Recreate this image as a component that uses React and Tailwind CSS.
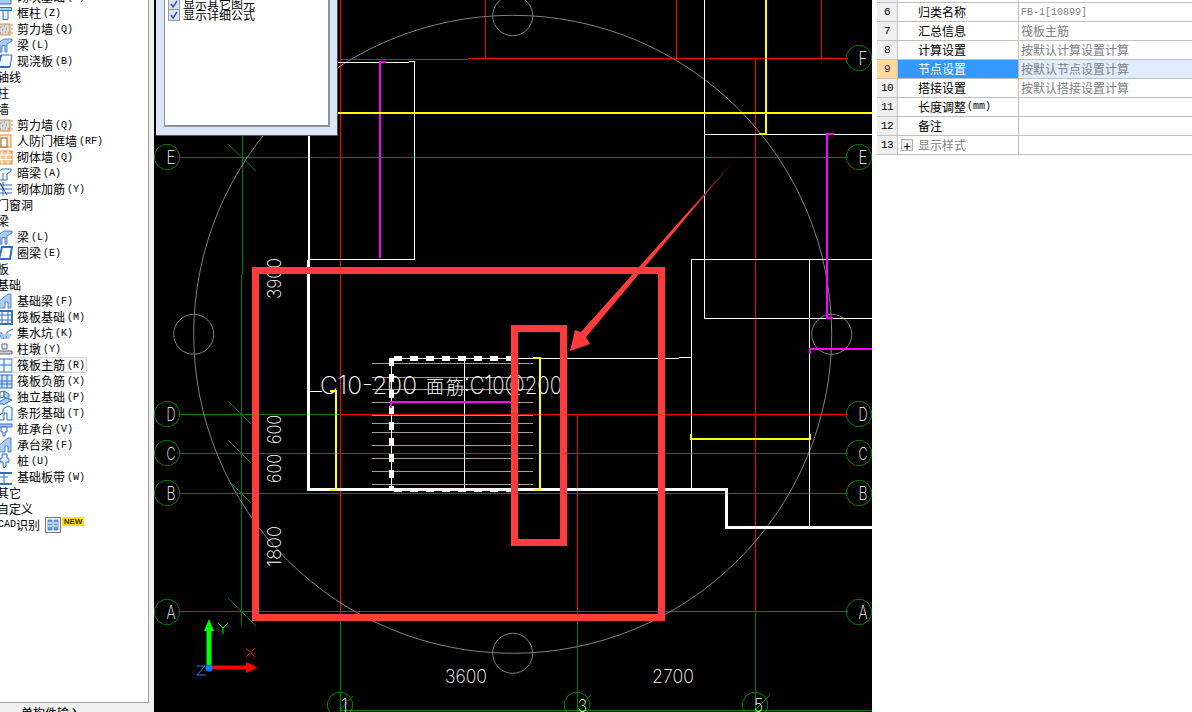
import React from "react";

const SANS = "font-['Noto_Sans_CJK_SC',sans-serif]";
const MONO = "font-['Liberation_Mono','Noto_Sans_CJK_SC',monospace]";

function Ico({ k }) {
  const B = "#2f6fc4", L = "#a8cdf0", O = "#e08a3c";
  const shapes = {
    top: <><path d="M2 9h12v6H2z" fill={L} stroke={B} /><path d="M5 9V4h6v5" fill="#fff" stroke={B} /></>,
    col: <><path d="M1.500 2.500h13v3h-13z" fill={L} stroke={B} /><path d="M6 5.500h5v9H6z" fill="#fff" stroke={B} /></>,
    wall: <><rect x="1" y="3" width="12" height="11" fill="#d8d8d8" stroke={O} /><path d="M3 6h1M7 5h1M5 9h1M9 8h1M3 12h1M8 11h1M11 12h1" stroke="#777" /><path d="M14 4h2M14 8h2M14 12h2" stroke={O} /></>,
    beam: <><path d="M1 6l6-4h8v2L10 7v8H8V8L5 9v6H3V9z" fill={L} stroke={B} strokeWidth=".8" /></>,
    slab: <><path d="M4 2h11l-2 12H1z" fill="#f4f9ff" stroke={B} /><path d="M4 2L1 14h12" fill="none" stroke={B} strokeWidth="2" /></>,
    door: <><rect x="1" y="2" width="13" height="12" fill="#fbe5cf" stroke={O} /><rect x="4" y="5" width="6" height="9" fill="#fff" stroke="#a05a1c" /></>,
    brick: <><rect x="0" y="2" width="15" height="13" fill="#f5c596" stroke={O} /><path d="M0 6h15M0 10.500h15M5 2v4M11 2v4M3 6v4.500M9 6v4.500M5 10.500V15M11 10.500V15" stroke="#fff" /></>,
    dark: <><path d="M1 7l4-3h9v2l-4 3v6H2V8z" fill="#eef6ff" stroke={B} /><path d="M6 8v7" stroke="#777" /></>,
    rein: <><path d="M1 4h14M1 8h14M1 12h14M6 1v14" stroke={B} fill="none" /><path d="M3 2l7 12" stroke="#1c3f80" /></>,
    ring: <><path d="M5 2h10l-2 12H2z" fill="none" stroke={B} strokeWidth="2" /></>,
    fbeam: <><path d="M1 15V9l5-4 5-4h3v14h-3V9H8v6z" fill={L} stroke={B} strokeWidth=".8" /></>,
    raft: <><rect x="1" y="2" width="14" height="13" fill="#fff" stroke={B} strokeWidth="2" /><path d="M5 2v13M11 2v13M1 6h14M1 11h14" stroke={B} /></>,
    pit: <><path d="M0 8h5v5h5V7l6-3" fill="none" stroke={B} /><path d="M0 9l4 5h8l3-5" fill={L} /><path d="M3 11h1M6 13h1M9 12h1" stroke={B} /></>,
    pier: <><path d="M5 3h5v5H5z" fill="#dfe8f2" stroke="#667" /><path d="M1 10h14v3H1z" fill="#c8ccd2" stroke="#667" /></>,
    main: <><rect x="0" y="2" width="15" height="13" fill="#eef6ff" stroke={B} /><path d="M0 8h15M7 2v13" stroke={B} /></>,
    neg: <><rect x="0" y="2" width="15" height="13" fill="#cfe2f7" stroke={B} /><path d="M0 8h15M0 11h15M5 2v13M10 2v13" stroke={B} /></>,
    iso: <><path d="M0 14l9-5 6 2-8 4.500z" fill={L} stroke={B} /><path d="M3 9V3l4-1v6z" fill="#fff" stroke={B} /><path d="M7 8V2l5 3v5z" fill={L} stroke={B} /></>,
    strip: <><path d="M1 15v-4l5-3V4l5-3 4 2v12h-5V8H7v7z" fill="#eef6ff" stroke={B} /></>,
    cap: <><path d="M0 3h15v3H0z" fill={L} stroke={B} /><path d="M4 6h6v5H8v4H6v-4H4z" fill="#fff" stroke={B} /></>,
    pile: <><path d="M5 1h5v4l2 1v3h-3v4l-2 2-1-2V9H3V6l2-1z" fill="#dce9f7" stroke={B} /></>,
    band: <><path d="M0 4h15M0 15h15" stroke={B} strokeWidth="2" /><path d="M7 4v11M3 8h8" stroke={B} /></>,
  };
  return <svg width="16" height="16" viewBox="0 0 16 16" className="shrink-0 -ml-[3px] mr-[4px]">{shapes[k]}</svg>;
}

const tree = [
  ["砌块基础", "M", "top"], ["框柱", "Z", "col"], ["剪力墙", "Q", "wall"], ["梁", "L", "beam"], ["现浇板", "B", "slab"],
  ["轴线"], ["柱"], ["墙"],
  ["剪力墙", "Q", "wall"], ["人防门框墙", "RF", "door"], ["砌体墙", "Q", "brick"], ["暗梁", "A", "dark"], ["砌体加筋", "Y", "rein"],
  ["门窗洞"], ["梁"],
  ["梁", "L", "beam"], ["圈梁", "E", "ring"],
  ["板"], ["基础"],
  ["基础梁", "F", "fbeam"], ["筏板基础", "M", "raft"], ["集水坑", "K", "pit"], ["柱墩", "Y", "pier"],
  ["筏板主筋", "R", "main", true], ["筏板负筋", "X", "neg"], ["独立基础", "P", "iso"], ["条形基础", "T", "strip"],
  ["桩承台", "V", "cap"], ["承台梁", "F", "fbeam"], ["桩", "U", "pile"], ["基础板带", "W", "band"],
  ["其它"], ["自定义"],
];

function TreeRow({ n, key2, k, sel }) {
  if (!k) return <div className={`h-4 leading-4 text-xs -ml-[3px] ${SANS}`}>{n}</div>;
  return (
    <div className="h-4 flex items-center relative">
      <Ico k={k} />
      {sel && <div className="absolute left-[12px] w-[75px] top-0 h-4 rounded-[2px] border border-[#d2d2d2] bg-[#f7f7f7]" />}
      <span className={`relative text-xs leading-4 ${SANS}`}>{n}</span>
      <span className={`relative top-[1px] ml-[2px] text-[10px] leading-4 ${MONO}`}>({key2})</span>
    </div>
  );
}

const rows = [
  [6, "归类名称", "FB-1[10899]"],
  [7, "汇总信息", "筏板主筋"],
  [8, "计算设置", "按默认计算设置计算"],
  [9, "节点设置", "按默认节点设置计算"],
  [10, "搭接设置", "按默认搭接设置计算"],
  [11, "长度调整", ""],
  [12, "备注", ""],
  [13, "显示样式", ""],
];

function PropRow({ no, name, val }) {
  const sel = no === 9;
  const last = no === 13;
  return (
    <div className="flex h-[19px] border-b border-[#c0c0c0]">
      <div className={`w-[21px] shrink-0 border-r border-[#c0c0c0] flex items-center justify-center text-[11px] tracking-[-0.6px] ${MONO} ${sel ? "bg-[#ffd79f] text-[#40107a]" : "bg-[#f0f0f0] text-black"}`}>{no}</div>
      <div className={`w-[121px] shrink-0 border-r border-[#c0c0c0] flex items-center text-xs ${SANS} ${sel ? "bg-[#3399ff] text-white" : ""} ${last ? "text-[#808080]" : ""}`}>
        {last ? (
          <span className="ml-[3px] mr-[5px] w-3 h-3 border border-[#b5b5b5] bg-[#eeeeee] flex items-center justify-center text-black text-[13px] leading-none">+</span>
        ) : (
          <span className="w-5 shrink-0" />
        )}
        {name}
        {no === 11 && <span className={`ml-[1px] text-[10px] ${MONO}`}>(mm)</span>}
      </div>
      <div className={`flex-1 pl-[2px] flex items-center text-[#808080] ${no === 6 ? `text-[10px] ${MONO}` : `text-xs ${SANS}`} ${sel ? "bg-[#deecfb]" : ""}`}>{val}</div>
    </div>
  );
}

const G = "#008000", R = "#ff0000", W = "#ffffff", Y = "#ffff00", M = "#ff00ff", A = "#808080", P = "#ff3b3b", BR = "#a89a92";

function Lines({ c, w = 1, d }) {
  return <path d={d} stroke={c} strokeWidth={w} fill="none" shapeRendering="crispEdges" />;
}

const CAD = "Inter, 'Noto Sans CJK SC', sans-serif";

function Bubble({ x, y, t, dx = 4 }) {
  const pts = Array.from({ length: 12 }, (_, i) => {
    const a = (i * Math.PI) / 6 + Math.PI / 12;
    return `${(x + 12.8 * Math.cos(a)).toFixed(1)},${(y + 12.8 * Math.sin(a)).toFixed(1)}`;
  }).join(" ");
  const narrow = t === "1";
  return (
    <g>
      <polygon points={pts} fill="none" stroke={G} />
      <text x={x + dx - (narrow ? 1 : 4.5)} y={y + 6.500} textLength={narrow ? undefined : 9} lengthAdjust="spacingAndGlyphs" fontFamily={CAD} fontWeight="200" fontSize="18" fill={W}>{t}</text>
    </g>
  );
}

function Dim({ x, y, t, r, len }) {
  return (
    <text x={x} y={y} transform={r ? `rotate(-90 ${x} ${y})` : undefined} textLength={len} lengthAdjust="spacingAndGlyphs" fontFamily={CAD} fontWeight="200" fontSize="19" fill={W}>{t}</text>
  );
}

function Canvas() {
  const bars = [363, 377, 389, 402, 415, 423, 432, 445, 458, 471, 484];
  const cw = { fontFamily: CAD, fontWeight: 200, fill: W };
  return (
    <svg width="718" height="712" viewBox="154 0 718 712" className="block">
      <defs>
        <linearGradient id="ar" gradientUnits="userSpaceOnUse" x1="738" y1="156" x2="690" y2="212">
          <stop offset="0" stopColor="#300808" />
          <stop offset="1" stopColor={P} />
        </linearGradient>
      </defs>
      <rect x="154" y="0" width="718" height="712" fill="#000" />

      {/* grid: green */}
      <Lines c={G} d="M180 157.500H340 M180 414.500H340 M180 453.500H340 M180 493.500H340 M180 611.500H340 M340 710.500H872 M242.500 135V275 M241.500 275V625 M340.500 611V712 M577.500 611V712 M755.500 611V712" />
      <path d="M228 144L256 171 M228 401L251 424 M228 440L251 463 M228 480L251 503 M228 598L256 626 M340 710L353 696 M577 710L591 695 M755 710L770 695" stroke={G} fill="none" />

      {/* grid: red */}
      <Lines c={R} d="M340 59.500H468 M468 58.500H848 M340 157.500H848 M340 414.500H848 M340 453.500H848 M340 493.500H848 M340 611.500H848 M340.500 0V611 M577.500 414V611 M755.500 58V611 M485.500 0V58 M676.500 0V58 M821.500 0V58" />

      {/* big ring */}
      <circle cx="512.700" cy="334.300" r="319" fill="none" stroke={A} />
      <circle cx="512.700" cy="15.700" r="20" fill="none" stroke={A} />
      <circle cx="512.700" cy="653.300" r="20" fill="none" stroke={A} />
      <circle cx="193.700" cy="334.300" r="20" fill="none" stroke={A} />
      <circle cx="831.700" cy="334.300" r="20" fill="none" stroke={A} />

      {/* bars */}
      <Lines c={BR} d={bars.map((y) => `M372 ${y}.500H533`).join(" ")} />

      {/* thin white */}
      <Lines c={W} d="M338 62.500H409 M409 61.500H414.500 M414.500 61V260 M309 259.500H414.500 M704.500 0V318 M704 134.500H872 M704 318.500H872 M691.500 259V488 M691 259.500H872 M809.500 259V527 M540 358.500H679 M679 357.500H691 M309 391.500H322 M391.500 358V489 M464.500 358V488 M391 358.500H540" />

      {/* thick white */}
      <path d="M309 135V260" stroke={W} strokeWidth="2" fill="none" shapeRendering="crispEdges" />
      <path d="M308.500 260V489.500H726.500V527.500H872" stroke={W} strokeWidth="3" fill="none" shapeRendering="crispEdges" />

      {/* dashed rect */}
      <path d="M394 358.500H512" stroke={W} strokeWidth="5" strokeDasharray="8 8" fill="none" shapeRendering="crispEdges" />
      <path d="M391.500 358V489" stroke={W} strokeWidth="5" strokeDasharray="8 8" fill="none" shapeRendering="crispEdges" />
      <path d="M394 491H512" stroke={W} strokeWidth="2" strokeDasharray="8 8" fill="none" shapeRendering="crispEdges" />

      {/* magenta */}
      <path d="M380 258V62H386" stroke={M} strokeWidth="2" fill="none" shapeRendering="crispEdges" />
      <path d="M834 134H827V318H833" stroke={M} strokeWidth="2" fill="none" shapeRendering="crispEdges" />
      <path d="M810 354V349H872" stroke={M} strokeWidth="2" fill="none" shapeRendering="crispEdges" />
      <path d="M391 408V402H510" stroke={M} strokeWidth="2" fill="none" shapeRendering="crispEdges" />

      {/* yellow */}
      <path d="M338 113H872" stroke={Y} strokeWidth="2" fill="none" shapeRendering="crispEdges" />
      <path d="M766 0V134H759" stroke={Y} strokeWidth="2" fill="none" shapeRendering="crispEdges" />
      <path d="M691 434V439H810V434" stroke={Y} strokeWidth="2" fill="none" shapeRendering="crispEdges" />
      <path d="M330 391H336V490H330" stroke={Y} strokeWidth="2" fill="none" shapeRendering="crispEdges" />
      <path d="M533 358H540V490H533" stroke={Y} strokeWidth="2" fill="none" shapeRendering="crispEdges" />

      {/* bubbles */}
      <Bubble x={167} y={157} t="E" />
      <Bubble x={167} y={414} t="D" />
      <Bubble x={167} y={453} t="C" />
      <Bubble x={167} y={493} t="B" />
      <Bubble x={167} y={612} t="A" />
      <Bubble x={859} y={58} t="F" />
      <Bubble x={859} y={157} t="E" />
      <Bubble x={859} y={414} t="D" />
      <Bubble x={859} y={453} t="C" />
      <Bubble x={859} y={493} t="B" />
      <Bubble x={859} y={612} t="A" />
      <Bubble x={340} y={705} t="1" dx={2} />
      <Bubble x={577} y={705} t="3" dx={5.500} />
      <Bubble x={755} y={705} t="5" dx={3.500} />

      {/* dims */}
      <Dim x={281} y={299} t="3900" r len={41} />
      <Dim x={281} y={444} t="600" r len={29} />
      <Dim x={281} y={483} t="600" r len={29} />
      <Dim x={281} y={567} t="1800" r len={41} />
      <Dim x={445} y={683} t="3600" len={42} />
      <Dim x={652} y={683} t="2700" len={42} />
      <text x="320" y="394" textLength="97" lengthAdjust="spacingAndGlyphs" fontSize="25" {...cw}>C10-200</text>
      <text x="426" y="393" fontSize="18" {...cw}>面</text>
      <text x="446" y="394" fontSize="18" {...cw}>筋</text>
      <text x="464" y="394" textLength="98" lengthAdjust="spacingAndGlyphs" fontSize="25" {...cw}>:C10@200</text>

      {/* annotation */}
      <rect x="255" y="270" width="406" height="347" fill="none" stroke={P} strokeWidth="7" shapeRendering="crispEdges" />
      <rect x="514" y="328" width="49.500" height="214.500" fill="none" stroke={P} strokeWidth="7" shapeRendering="crispEdges" />
      <polygon points="738,156 586,337 590,344 570,351 575,330 581,332" fill="url(#ar)" />

      {/* ucs */}
      <path d="M209 668V628" stroke="#00ff00" strokeWidth="5" />
      <path d="M209 619L204 631H214z" fill="#00ff00" />
      <path d="M209 667.500H248" stroke={R} strokeWidth="4" />
      <path d="M258 667.500L246 662V673z" fill={R} />
      <circle cx="209" cy="668" r="3.500" fill="#0a7cff" />
      <path d="M218 623L223 628L228 623 M223 628V634" stroke="#00ff00" fill="none" />
      <path d="M246 648L255 657 M255 648L246 657" stroke={R} fill="none" />
      <path d="M197 666H205L197 675H206" stroke="#2a80ff" fill="none" />
    </svg>
  );
}

function Check({ label }) {
  return (
    <div className="h-[11px] flex items-center gap-[3px]">
      <svg width="12" height="12" viewBox="0 0 12 12" className="shrink-0">
        <rect x=".5" y=".5" width="11" height="11" fill="#dde3ee" stroke="#9a9a9a" />
        <path d="M3 6l2 3 4-6" stroke="#3a55a8" strokeWidth="1.500" fill="none" />
      </svg>
      <span className={`text-xs leading-[11px] ${SANS} whitespace-nowrap`}>{label}</span>
    </div>
  );
}

export default function App() {
  return (
    <div className="w-[1192px] h-[712px] flex overflow-hidden bg-[#f0f0f0]">
      {/* left */}
      <div className="w-[154px] shrink-0 h-full flex flex-col pr-[5px] overflow-hidden">
        <div className="flex-1 min-h-0 bg-white border-r border-b border-[#a0a0a0] overflow-hidden">
          <div className="-mt-[11px]">
            {tree.map((r, i) => (
              <TreeRow key={i} n={r[0]} key2={r[1]} k={r[2]} sel={r[3]} />
            ))}
            <div className="h-4 flex items-center -ml-[2px]">
              <span className={`text-[10px] leading-4 ${MONO}`}>CAD</span>
              <span className={`text-xs leading-4 ${SANS}`}>识别</span>
              <svg width="16" height="16" viewBox="0 0 16 16" className="ml-[5px] shrink-0">
                <rect x=".5" y=".5" width="15" height="15" fill="#f4f4f4" stroke="#777" />
                <rect x="3" y="3" width="4" height="10" fill="#6aa0dc" stroke="#2f6fc4" strokeWidth=".6" />
                <rect x="9" y="3" width="4" height="10" fill="#6aa0dc" stroke="#2f6fc4" strokeWidth=".6" />
                <path d="M3 6h4M3 9h4M9 6h4M9 9h4" stroke="#fff" />
              </svg>
              <span className="self-start ml-[1px] h-[9px] w-[22px] bg-[#ffe000] text-[#333] text-[8px] leading-[9px] font-bold text-center font-['Liberation_Sans',sans-serif]">NEW</span>
            </div>
          </div>
        </div>
        <div className={`h-[9px] shrink-0 pl-[21px] text-xs leading-[20px] overflow-hidden ${SANS}`}>单构件输入</div>
      </div>

      {/* canvas */}
      <div className="relative w-[718px] shrink-0 h-full">
        <Canvas />
        <div className="absolute left-[2px] top-0 w-[182px] h-[136px] bg-[#dbe5f3] border-r border-b border-[#555555] pl-2 pr-[7px] pb-2">
          <div className="h-full bg-white border-r-2 border-b-2 border-l border-[#8f949c] pl-[3px] overflow-hidden">
            <div className="-mt-[2px]">
              <Check label="显示其它图元" />
              <Check label="显示详细公式" />
            </div>
          </div>
        </div>
      </div>

      {/* right */}
      <div className="flex-1 h-full pl-[5px] bg-white">
        <div className="h-[3px] border-b border-[#c0c0c0] flex">
          <div className="w-[21px] bg-[#f0f0f0] border-r border-[#c0c0c0]" />
          <div className="w-[121px] border-r border-[#c0c0c0]" />
        </div>
        {rows.map((r) => (
          <PropRow key={r[0]} no={r[0]} name={r[1]} val={r[2]} />
        ))}
      </div>
    </div>
  );
}
